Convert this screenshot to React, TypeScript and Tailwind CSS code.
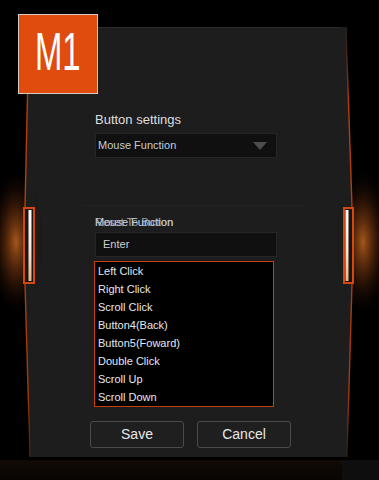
import React from 'react';

const functions = [
  'Left Click',
  'Right Click',
  'Scroll Click',
  'Button4(Back)',
  'Button5(Foward)',
  'Double Click',
  'Scroll Up',
  'Scroll Down',
];

const EdgeDecor: React.FC = () => (
  <svg
    className="absolute inset-0 pointer-events-none"
    width="379"
    height="480"
    viewBox="0 0 379 480"
  >
    <defs>
      <radialGradient id="glow">
        <stop offset="0%" stopColor="#b8601e" stopOpacity="0.9" />
        <stop offset="45%" stopColor="#6b2f0d" stopOpacity="0.55" />
        <stop offset="100%" stopColor="#000000" stopOpacity="0" />
      </radialGradient>
      <linearGradient id="edge" gradientUnits="userSpaceOnUse" x1="0" y1="27" x2="0" y2="457">
        <stop offset="0%" stopColor="#c9430c" stopOpacity="0" />
        <stop offset="18%" stopColor="#c9430c" stopOpacity="0.9" />
        <stop offset="85%" stopColor="#c9430c" stopOpacity="0.8" />
        <stop offset="100%" stopColor="#c9430c" stopOpacity="0.15" />
      </linearGradient>
      <linearGradient id="bar" x1="0" y1="0" x2="0" y2="1">
        <stop offset="0%" stopColor="#ffffff" />
        <stop offset="60%" stopColor="#f6e2cf" />
        <stop offset="100%" stopColor="#e9b48a" />
      </linearGradient>
    </defs>

    {/* glows outside the notches */}
    <ellipse cx="16" cy="242" rx="28" ry="76" fill="url(#glow)" />
    <ellipse cx="363" cy="242" rx="28" ry="76" fill="url(#glow)" />

    {/* slanted side wedges */}
    <polygon points="29,27 25,207 25,284 30,457 34,457 34,27" fill="#1d1d1d" />
    <polygon points="346,27 352,207 352,284 347,457 340,457 340,27" fill="#1d1d1d" />

    {/* edge lines */}
    <path d="M29,27 L25,207 M25,284 L30,457" stroke="url(#edge)" strokeWidth="1.4" fill="none" />
    <path d="M346,27 L352,207 M352,284 L347,457" stroke="url(#edge)" strokeWidth="1.4" fill="none" />

    {/* left notch */}
    <rect x="24" y="208" width="10" height="75" fill="#161616" stroke="#d5470c" strokeWidth="2" />
    <rect x="28.5" y="210" width="3" height="71" fill="url(#bar)" />

    {/* right notch */}
    <rect x="344" y="208" width="9" height="75" fill="#161616" stroke="#d5470c" strokeWidth="2" />
    <rect x="345.5" y="210" width="3" height="71" fill="url(#bar)" />
  </svg>
);

const App: React.FC = () => {
  return (
    <div className="relative w-[379px] h-[480px] bg-black overflow-hidden font-['Liberation_Sans',Arial,sans-serif]">
      <div className="pt-[27px] pl-[29px]">
        <div className="w-[318px] h-[430px] bg-[#1d1d1d] shadow-[inset_0_1px_0_#2b2b2b] pl-[66px] pt-[85px]">
          <div className="text-[13px] leading-[15px] text-[#dedede]">Button settings</div>

          {/* dropdown */}
          <div className="mt-[6px] w-[182px] h-[25px] bg-[#101010] border border-[#262626] flex items-center justify-between pl-[2px] pr-[9px]">
            <span className="text-[11px] text-[#c3ccd8]">Mouse Function</span>
            <svg width="14" height="8" viewBox="0 0 14 8">
              <polygon points="0,0 14,0 7,8" fill="#4c4c4c" />
            </svg>
          </div>

          <div className="mt-[47px] -ml-[10px] w-[217px] h-px bg-[repeating-linear-gradient(90deg,#333_0_1px,transparent_1px_4px)]" />

          {/* overlapped label */}
          <div className="relative mt-[10px] h-[13px] text-[11px] leading-[13px]">
            <span className="absolute left-0 top-0 text-[#cfd4dc]">Mouse Function</span>
            <span className="absolute left-0 top-0 text-[#b4bcc8] opacity-85">Reset To Button</span>
          </div>

          {/* text input */}
          <div className="mt-[3px] w-[182px] h-[25px] bg-[#101010] border border-[#262626] flex items-center pl-[7px]">
            <span className="text-[11px] text-[#cfcfcf]">Enter</span>
          </div>

          {/* function list */}
          <ul className="mt-[4px] -ml-px w-[180px] bg-black border border-[#c63f0b]">
            {functions.map((f) => (
              <li key={f} className="h-[18px] leading-[18px] pl-[3px] text-[11px] text-[#e4e8ee]">
                {f}
              </li>
            ))}
          </ul>

          <div className="mt-[14px] -ml-[5px] flex gap-[13px]">
            <button className="w-[94px] h-[27px] rounded-[3px] border border-[#4a4a4a] bg-[#1f1f1f] text-[14px] text-[#e8e8e8]">
              Save
            </button>
            <button className="w-[94px] h-[27px] rounded-[3px] border border-[#4a4a4a] bg-[#1f1f1f] text-[14px] text-[#e8e8e8]">
              Cancel
            </button>
          </div>
        </div>
      </div>

      {/* bottom strip */}
      <div className="mt-[3px] h-[20px] flex">
        <div className="flex-1 bg-[linear-gradient(180deg,#120a05,#080503)]" />
        <div className="w-[37px] bg-[#0e0e0e]" />
      </div>

      <EdgeDecor />

      {/* M1 badge */}
      <div className="absolute left-[18px] top-[14px] w-[80px] h-[80px] bg-[#e04b0e] border border-[#d6ccc4] flex items-center justify-center pb-[6px]">
        <span className="inline-block text-[53px] leading-none text-white scale-x-[0.62]">M1</span>
      </div>
    </div>
  );
};

export default App;
